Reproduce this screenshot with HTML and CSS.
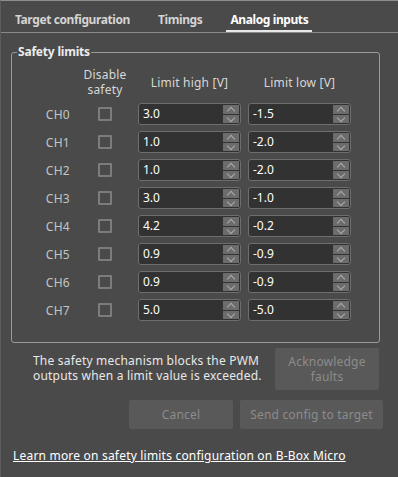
FILE: index.html
```html
<!DOCTYPE html>
<html lang="en">
<head>
    <meta charset="UTF-8">
    <meta name="viewport" content="width=device-width, initial-scale=1.0">
    <title>Analog inputs</title>
    <link rel="stylesheet" href="styles.css">
</head>
<body>
<div class="window">
    <div class="tabs">
        <div class="tab">Target configuration</div>
        <div class="tab">Timings</div>
        <div class="tab active">Analog inputs</div>
    </div>

    <fieldset class="group">
        <legend>Safety limits</legend>
        <div class="limits">
            <div></div>
            <div class="head two">Disable<br>safety</div>
            <div class="head">Limit high [V]</div>
            <div class="head">Limit low [V]</div>

            <div class="ch">CH0</div><div class="cell"><span class="check"></span></div>
            <div class="spin"><span class="val">3.0</span><span class="btns"><i class="up"></i><i class="down"></i></span></div>
            <div class="spin"><span class="val">-1.5</span><span class="btns"><i class="up"></i><i class="down"></i></span></div>

            <div class="ch">CH1</div><div class="cell"><span class="check"></span></div>
            <div class="spin"><span class="val">1.0</span><span class="btns"><i class="up"></i><i class="down"></i></span></div>
            <div class="spin"><span class="val">-2.0</span><span class="btns"><i class="up"></i><i class="down"></i></span></div>

            <div class="ch">CH2</div><div class="cell"><span class="check"></span></div>
            <div class="spin"><span class="val">1.0</span><span class="btns"><i class="up"></i><i class="down"></i></span></div>
            <div class="spin"><span class="val">-2.0</span><span class="btns"><i class="up"></i><i class="down"></i></span></div>

            <div class="ch">CH3</div><div class="cell"><span class="check"></span></div>
            <div class="spin"><span class="val">3.0</span><span class="btns"><i class="up"></i><i class="down"></i></span></div>
            <div class="spin"><span class="val">-1.0</span><span class="btns"><i class="up"></i><i class="down"></i></span></div>

            <div class="ch">CH4</div><div class="cell"><span class="check"></span></div>
            <div class="spin"><span class="val">4.2</span><span class="btns"><i class="up"></i><i class="down"></i></span></div>
            <div class="spin"><span class="val">-0.2</span><span class="btns"><i class="up"></i><i class="down"></i></span></div>

            <div class="ch">CH5</div><div class="cell"><span class="check"></span></div>
            <div class="spin"><span class="val">0.9</span><span class="btns"><i class="up"></i><i class="down"></i></span></div>
            <div class="spin"><span class="val">-0.9</span><span class="btns"><i class="up"></i><i class="down"></i></span></div>

            <div class="ch">CH6</div><div class="cell"><span class="check"></span></div>
            <div class="spin"><span class="val">0.9</span><span class="btns"><i class="up"></i><i class="down"></i></span></div>
            <div class="spin"><span class="val">-0.9</span><span class="btns"><i class="up"></i><i class="down"></i></span></div>

            <div class="ch">CH7</div><div class="cell"><span class="check"></span></div>
            <div class="spin"><span class="val">5.0</span><span class="btns"><i class="up"></i><i class="down"></i></span></div>
            <div class="spin"><span class="val">-5.0</span><span class="btns"><i class="up"></i><i class="down"></i></span></div>
        </div>
    </fieldset>

    <div class="info">
        <p class="note">The safety mechanism blocks the PWM<br>outputs when a limit value is exceeded.</p>
        <button class="btn ack" disabled>Acknowledge<br>faults</button>
    </div>

    <div class="actions">
        <button class="btn cancel" disabled>Cancel</button>
        <button class="btn send" disabled>Send config to target</button>
    </div>

    <a class="link" href="#">Learn more on safety limits configuration on B-Box Micro</a>
</div>
</body>
</html>
```

FILE: styles.css
```css
body {
    margin: 0;
    background-color: #4a4a4a;
    font-family: "Noto Sans", "Open Sans", sans-serif;
    font-size: 12px;
    color: #e6e6e6;
}
.window {
    width: 398px;
    height: 477px;
    box-sizing: border-box;
    border-top: 1px solid #8e8e8e;
    border-left: 1px solid #5c5c5c;
    overflow: hidden;
}
.tabs {
    display: flex;
    gap: 20px;
    height: 31px;
    padding-left: 10px;
    border-bottom: 1px solid #8a8a8a;
}
.tab {
    padding: 8px 4px 0;
    line-height: 21px;
    font-weight: bold;
    letter-spacing: -0.4px;
    color: #d4d4d4;
    border-bottom: 2px solid transparent;
}
.tab.active {
    color: #ffffff;
    border-bottom-color: #e8e8e8;
}
.group {
    width: 369px;
    margin: 11px 0 0 10px;
    padding: 7px 0 21px 26px;
    box-sizing: border-box;
    border: 1px solid #9a9a9a;
    border-radius: 3px;
}
.group legend {
    margin-left: -21px;
    padding: 0 1px;
    font-weight: bold;
    letter-spacing: -0.2px;
    line-height: 16px;
    color: #ececec;
}
.limits {
    display: grid;
    grid-template-columns: 34px 52px 103px 103px;
    grid-template-rows: 30px;
    grid-auto-rows: 22px;
    column-gap: 7px;
    row-gap: 6px;
}
.head {
    align-self: center;
    text-align: center;
    line-height: 15px;
    letter-spacing: 0.2px;
    color: #d8d8d8;
}
.ch {
    align-self: center;
    text-align: right;
    padding-right: 2px;
    letter-spacing: 0.3px;
    color: #c4c4c4;
}
.cell {
    display: flex;
    align-items: center;
    justify-content: center;
}
.check {
    width: 10px;
    height: 10px;
    border: 2px solid #7c7c7c;
    border-radius: 1px;
}
.spin {
    display: flex;
    border: 1px solid #6e6e6e;
    border-radius: 3px;
    background-color: #323232;
}
.val {
    flex: 1;
    padding-left: 4px;
    line-height: 20px;
    color: #ffffff;
}
.btns {
    display: flex;
    flex-direction: column;
    width: 16px;
    padding: 1px 1px 1px 0;
    gap: 1px;
}
.btns i {
    flex: 1;
    position: relative;
    background-color: #6c6c6c;
}
.btns i::after {
    content: "";
    position: absolute;
    left: 5px;
    width: 5px;
    height: 5px;
    border-left: 1.5px solid #acacac;
    border-top: 1.5px solid #acacac;
}
.btns .up::after {
    top: 3px;
    transform: rotate(45deg);
}
.btns .down::after {
    top: 0;
    transform: rotate(225deg);
}
.info {
    display: flex;
    align-items: flex-start;
    margin: 5px 0 0 32px;
}
.note {
    margin: 0 14px 0 0;
    padding-top: 5px;
    width: 228px;
    line-height: 15px;
    letter-spacing: 0.2px;
    color: #e8e8e8;
    white-space: nowrap;
}
.btn {
    font-family: inherit;
    font-size: 12px;
    letter-spacing: 0.2px;
    border: none;
    border-radius: 2px;
    background-color: #595959;
    color: #8c8c8c;
}
.ack {
    width: 104px;
    height: 42px;
    line-height: 15px;
    padding: 0;
}
.actions {
    display: flex;
    justify-content: flex-end;
    gap: 7px;
    margin: 10px 15px 0 0;
}
.cancel {
    width: 104px;
    height: 29px;
}
.send {
    width: 143px;
    height: 29px;
}
.link {
    display: inline-block;
    margin: 18px 0 0 12px;
    line-height: 18px;
    letter-spacing: 0.2px;
    color: #ffffff;
}
```
